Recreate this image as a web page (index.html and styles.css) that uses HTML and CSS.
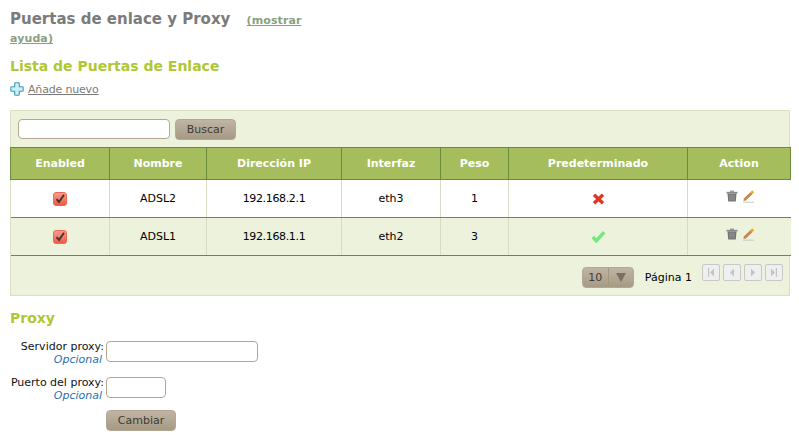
FILE: index.html
```html
<!DOCTYPE html>
<html lang="es">
<head>
<meta charset="utf-8">
<title>Puertas de enlace y Proxy</title>
<link rel="stylesheet" href="styles.css">
</head>
<body>
<h1 class="title">Puertas de enlace y Proxy <a class="help first" href="#">(mostrar</a> <a class="help" href="#">ayuda)</a></h1>
<h2 class="section">Lista de Puertas de Enlace</h2>
<a class="add" href="#">
  <svg class="add-icon" width="14" height="14" viewBox="0 0 14 14"><path d="M5.500.8h3q.8 0 .8.8v3.100h3.100q.8 0 .8.8v3q0 .8-.8.8H9.300v3.100q0 .8-.8.8h-3q-.8 0-.8-.8V9.300H1.600q-.8 0-.8-.8v-3q0-.8.8-.8h3.100V1.600q0-.8.8-.8z" fill="#cdeef5" stroke="#3a9dbb" stroke-width="1.100"/></svg>
  <span>Añade nuevo</span>
</a>
<div class="panel">
  <div class="search">
    <input class="field search-field" type="text">
    <button class="btn search-btn">Buscar</button>
  </div>
  <table class="grid">
    <colgroup>
      <col class="c1"><col class="c2"><col class="c3"><col class="c4"><col class="c5"><col class="c6"><col class="c7">
    </colgroup>
    <thead>
      <tr><th>Enabled</th><th>Nombre</th><th>Dirección IP</th><th>Interfaz</th><th>Peso</th><th>Predeterminado</th><th>Action</th></tr>
    </thead>
    <tbody>
      <tr>
        <td><svg width="14" height="14" viewBox="0 0 14 14"><defs><linearGradient id="chk" x1="0" y1="0" x2="0" y2="1"><stop offset="0" stop-color="#f9a093"/><stop offset="1" stop-color="#ee5643"/></linearGradient></defs><rect x=".5" y=".5" width="13" height="13" rx="2.5" fill="url(#chk)" stroke="#ea6a58"/><path d="M3.500 7.200l2.500 2.800L11 2.800" fill="none" stroke="#43322f" stroke-width="1.900"/></svg></td>
        <td>ADSL2</td><td class="ip">192.168.2.1</td><td>eth3</td><td>1</td>
        <td><svg width="13" height="12" viewBox="0 0 13 12"><path d="M2 1.800l9 8.400M11 1.800l-9 8.400" stroke="#e5341f" stroke-width="3.400"/></svg></td>
        <td class="actions">
          <svg width="12" height="12" viewBox="0 0 12 12"><path d="M.5 1.800h11v1.700H.5z" fill="#8a8a8a"/><path d="M4 1.800V.6h4v1.200" fill="#8a8a8a"/><path d="M1.500 3.500h9l-.7 8H2.200z" fill="#737373"/><path d="M4 4.500v6M6 4.500v6M8 4.500v6" stroke="#a3a3a3" stroke-width=".8"/></svg>
          <svg width="12" height="13" viewBox="0 0 12 13"><path d="M.8 8.500L7.500 2l2 2-6.700 6.500-2.300.5z" fill="#c6884c"/><path d="M7.500 2l1.700-1.700 2 2L9.500 4z" fill="#f6a821"/><path d="M0 12.200h11" stroke="#c9c9c9"/></svg>
        </td>
      </tr>
      <tr class="alt">
        <td><svg width="14" height="14" viewBox="0 0 14 14"><rect x=".5" y=".5" width="13" height="13" rx="2.500" fill="url(#chk)" stroke="#ea6a58"/><path d="M3.500 7.200l2.500 2.800L11 2.800" fill="none" stroke="#43322f" stroke-width="1.900"/></svg></td>
        <td>ADSL1</td><td class="ip">192.168.1.1</td><td>eth2</td><td>3</td>
        <td><svg width="15" height="13" viewBox="0 0 15 13"><path d="M1.800 7l3.500 3.800L13.200 2.200" fill="none" stroke="#74e67f" stroke-width="3.400"/></svg></td>
        <td class="actions">
          <svg width="12" height="12" viewBox="0 0 12 12"><path d="M.5 1.800h11v1.700H.5z" fill="#8a8a8a"/><path d="M4 1.800V.6h4v1.200" fill="#8a8a8a"/><path d="M1.500 3.500h9l-.7 8H2.200z" fill="#737373"/><path d="M4 4.500v6M6 4.500v6M8 4.500v6" stroke="#a3a3a3" stroke-width=".8"/></svg>
          <svg width="12" height="13" viewBox="0 0 12 13"><path d="M.8 8.500L7.500 2l2 2-6.700 6.500-2.300.5z" fill="#c6884c"/><path d="M7.500 2l1.700-1.700 2 2L9.500 4z" fill="#f6a821"/><path d="M0 12.200h11" stroke="#c9c9c9"/></svg>
        </td>
      </tr>
    </tbody>
  </table>
  <div class="pager">
    <div class="size"><span class="size-val">10</span><span class="size-arrow"><svg width="10" height="9" viewBox="0 0 10 9"><path d="M0 0h10L5 9z" fill="#7a6f60"/></svg></span></div>
    <span class="page">Página 1</span>
    <div class="nav">
      <span class="nav-btn"><svg width="8" height="9" viewBox="0 0 8 9"><path d="M1 0h1.200v9H1zM7 .5v8L3 4.500z" fill="#c4c4c4"/></svg></span>
      <span class="nav-btn"><svg width="8" height="9" viewBox="0 0 8 9"><path d="M6 .5v8L2 4.500z" fill="#c4c4c4"/></svg></span>
      <span class="nav-btn"><svg width="8" height="9" viewBox="0 0 8 9"><path d="M2 .5v8l4-4z" fill="#c4c4c4"/></svg></span>
      <span class="nav-btn"><svg width="8" height="9" viewBox="0 0 8 9"><path d="M1 .5v8l4-4zM5.800 0H7v9H5.800z" fill="#c4c4c4"/></svg></span>
    </div>
  </div>
</div>
<h2 class="section proxy-title">Proxy</h2>
<form class="form">
  <div class="row">
    <div class="label">Servidor proxy:<em>Opcional</em></div>
    <input class="field long" type="text">
  </div>
  <div class="row">
    <div class="label">Puerto del proxy:<em>Opcional</em></div>
    <input class="field short" type="text">
  </div>
  <div class="row submit">
    <div class="label"></div>
    <button class="btn change" type="button">Cambiar</button>
  </div>
</form>
</body>
</html>
```
FILE: styles.css
```css
* { box-sizing: border-box; }
html, body { margin: 0; padding: 0; }
body {
  background: #fff;
  font-family: "DejaVu Sans", sans-serif;
  font-size: 11px;
  color: #000;
  padding: 10px 9px 0 10px;
  height: 444px;
  overflow: hidden;
}
.title {
  width: 300px;
  margin: 0;
  padding-top: 1px;
  font-size: 15px;
  line-height: 16px;
  font-weight: bold;
  color: #7b7b7b;
}
.help {
  font-size: 11px;
  line-height: 16px;
  color: #8a9f7d;
  letter-spacing: .1px;
}
.first { margin-left: 11px; }
.section {
  margin: 9px 0 0;
  font-size: 14px;
  line-height: 20px;
  font-weight: bold;
  color: #aec835;
}
.add {
  display: flex;
  align-items: center;
  gap: 4px;
  margin-top: 5px;
  height: 16px;
  color: #7b7b7b;
  font-size: 11px;
  letter-spacing: -.18px;
}
.add span { text-decoration: underline; }
.panel {
  margin-top: 13px;
  width: 780px;
  height: 186px;
  background: #edf2dc;
  border: 1px solid #d9dfc0;
}
.search {
  display: flex;
  align-items: center;
  gap: 5px;
  height: 36px;
  padding-left: 7px;
}
.field {
  height: 20px;
  background: #fff;
  border: 1px solid #b5a78f;
  border-radius: 4px;
  padding: 0 4px;
}
.search-field { width: 152px; }
.btn {
  border: 1px solid #b3a993;
  border-radius: 4px;
  background: linear-gradient(#bfb5a3, #a69a85);
  color: #3e3a33;
  font-family: "DejaVu Sans", sans-serif;
  font-size: 11px;
  padding: 0;
}
.search-btn { width: 61px; height: 21px; }
.grid {
  width: 780px;
  margin-left: -1px;
  border-collapse: collapse;
  table-layout: fixed;
  border-top: 1px solid #6b8a3a;
}
.c1 { width: 99px; }
.c2 { width: 97px; }
.c3 { width: 135px; }
.c4 { width: 99px; }
.c5 { width: 68px; }
.c6 { width: 179px; }
.c7 { width: 103px; }
th {
  height: 32px;
  padding: 0;
  background: #a5bd5c;
  color: #fff;
  font-size: 11px;
  font-weight: bold;
  text-align: center;
  border-left: 1px solid #6b8a3a;
  border-right: 1px solid #6b8a3a;
  border-bottom: 1px solid #6b8a3a;
}
td {
  height: 38px;
  padding: 0;
  text-align: center;
  font-size: 11px;
  background: #fff;
  border-left: 1px solid #d9dcc4;
  border-bottom: 1px solid #6b8a3a;
}
td:first-child { border-left: 0; }
td svg { display: inline-block; vertical-align: middle; }
.alt td { background: #edf2dc; }
.ip { letter-spacing: -.35px; }
.actions { padding: 0 0 5px 2px; }
.actions svg + svg { margin-left: 1px; }
.pager {
  display: flex;
  align-items: center;
  justify-content: flex-end;
  height: 38px;
  padding: 4px 6px 0 0;
}
.size {
  display: flex;
  width: 52px;
  height: 21px;
  margin-right: 11px;
  border: 1px solid #b3a993;
  border-radius: 4px;
  background: linear-gradient(#bfb5a3, #a69a85);
  color: #3e3a33;
}
.size-val {
  width: 26px;
  line-height: 19px;
  text-align: center;
  border-right: 1px solid #a3977f;
}
.size-arrow {
  flex: 1;
  display: flex;
  align-items: center;
  justify-content: center;
}
.page { margin-right: 10px; }
.nav { display: flex; gap: 3px; margin-top: -10px; }
.nav-btn {
  display: flex;
  align-items: center;
  justify-content: center;
  width: 18px;
  height: 17px;
  background: #efefef;
  border: 1px solid #c8c8c8;
  border-radius: 2px;
}
.proxy-title { margin-top: 12px; }
.form { margin-top: 12px; }
.row { display: flex; align-items: flex-start; margin-bottom: 10px; }
.label {
  width: 94px;
  margin-right: 2px;
  text-align: right;
  line-height: 13px;
  color: #111;
  white-space: nowrap;
}
.label em {
  display: block;
  padding-right: 2px;
  color: #2a6fb5;
  font-size: 11px;
}
.long { width: 152px; height: 21px; margin-top: 1px; }
.short { width: 60px; height: 21px; margin-top: 1px; }
.submit { margin-top: -2px; }
.change { width: 70px; height: 21px; font-size: 11px; }
```
